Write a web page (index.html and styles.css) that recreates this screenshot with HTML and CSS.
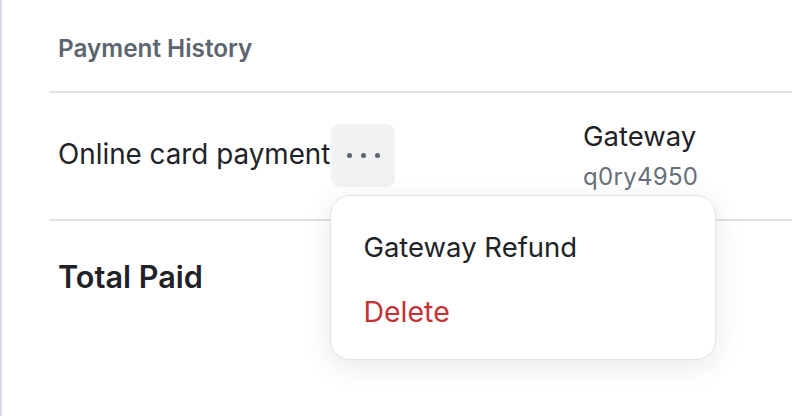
FILE: index.html
```html
<!DOCTYPE html>
<html>
<head>
<meta charset="utf-8">
<link rel="stylesheet" href="styles.css">
</head>
<body>
<div class="frame">
  <div class="panel">
    <div class="head-row">
      <div class="cell head">Payment History</div>
    </div>
    <div class="pay-row">
      <div class="cell desc">
        <span class="desc-text">Online card payment</span>
        <div class="menu-anchor">
          <button class="more-btn" aria-label="More">
            <span class="dot"></span><span class="dot"></span><span class="dot"></span>
          </button>
          <div class="menu">
            <div class="menu-item">Gateway Refund</div>
            <div class="menu-item danger">Delete</div>
          </div>
        </div>
      </div>
      <div class="cell method">
        <div class="method-name">Gateway</div>
        <div class="method-ref">q0ry4950</div>
      </div>
    </div>
    <div class="total-row">
      <div class="cell total">Total Paid</div>
    </div>
  </div>
</div>
</body>
</html>
```

FILE: styles.css
```css
html, body {
  margin: 0;
  padding: 0;
  background: #ffffff;
}
body {
  font-family: Inter, "Noto Sans", "Liberation Sans", sans-serif;
  color: #1f2328;
  width: 792px;
  height: 416px;
  overflow: hidden;
}
.frame {
  height: 416px;
  border-left: 2px solid #d7dbe4;
  padding-left: 47px;
  box-sizing: border-box;
}
.panel {
  display: flex;
  flex-direction: column;
}
.cell {
  padding-left: 9px;
}
.head-row {
  display: flex;
  align-items: center;
  border-bottom: 2px solid #dfe2e6;
  box-sizing: border-box;
  height: 93px;
}
.head {
  font-size: 24.3px;
  font-weight: 600;
  color: #5d6570;
  padding-top: 5px;
}
.pay-row {
  height: 128px;
  display: flex;
  align-items: center;
  border-bottom: 2px solid #dfe2e6;
  box-sizing: border-box;
}
.desc {
  display: flex;
  align-items: center;
  width: 525px;
  box-sizing: border-box;
}
.desc-text {
  font-size: 27.8px;
  color: #1f2328;
  padding-bottom: 5px;
}
.menu-anchor {
  position: relative;
  margin-left: 1px;
}
.more-btn {
  width: 64px;
  height: 63px;
  border: none;
  border-radius: 9px;
  background: #f1f2f4;
  display: flex;
  align-items: center;
  justify-content: center;
  gap: 9px;
  padding: 0;
  margin: 0 0 1px;
}
.dot {
  width: 5px;
  height: 5px;
  border-radius: 50%;
  background: #5d6570;
}
.menu {
  position: absolute;
  left: -1px;
  top: 71px;
  width: 386px;
  height: 165px;
  box-sizing: border-box;
  background: #ffffff;
  border: 1px solid #e1e4e8;
  border-radius: 20px;
  box-shadow: 0 6px 28px rgba(20, 30, 50, 0.10);
  padding: 19px 0 16px;
  z-index: 10;
}
.menu-item {
  height: 64px;
  display: flex;
  align-items: center;
  padding-left: 32px;
  font-size: 27.5px;
  color: #1f2328;
}
.menu-item.danger {
  color: #c53234;
  font-size: 28.5px;
}
.method {
  display: flex;
  flex-direction: column;
}
.method-name {
  font-size: 27.5px;
  color: #1f2328;
  line-height: 32px;
}
.method-ref {
  font-size: 24px;
  color: #67707b;
  line-height: 30px;
  margin-top: 10px;
  letter-spacing: 0.3px;
}
.total-row {
  height: 118px;
  display: flex;
  align-items: center;
}
.total {
  font-size: 30.6px;
  font-weight: 600;
  color: #1f2328;
  padding-bottom: 8px;
}
```
